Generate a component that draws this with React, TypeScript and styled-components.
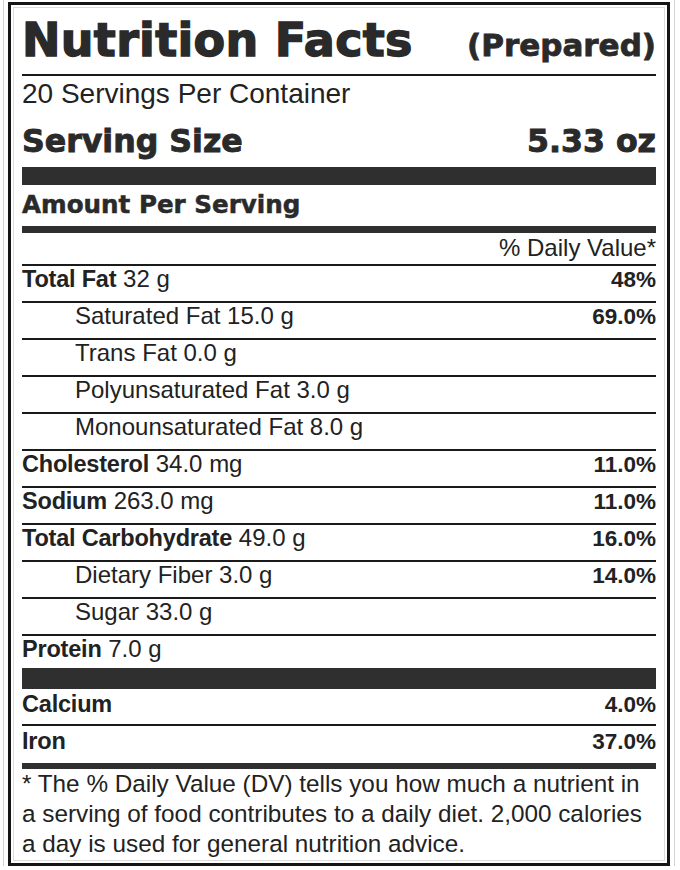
import React from "react";
import styled, { createGlobalStyle } from "styled-components";

const GlobalStyle = createGlobalStyle`
  html, body { margin: 0; padding: 0; background: #ffffff; }
  body { font-family: "Liberation Sans", Arial, sans-serif; color: #222; }
`;

const Page = styled.div`
  padding: 2px 0 0 8px;
`;

const Label = styled.section`
  box-sizing: border-box;
  width: 662px;
  border: 3px solid #151515;
  padding: 0 11px 4px;
  background: #fff;
  box-shadow: inset 0 0 0 2px #fff, inset 0 0 0 3px #dcdcdc, 0 0 0 4px #fff,
    0 0 0 5px #d4d4d4;
`;

const Header = styled.header`
  display: flex;
  justify-content: space-between;
  align-items: baseline;
  height: 46px;
  padding: 12px 0 11px;
  border-bottom: 2px solid #1a1a1a;
`;

const Title = styled.h1`
  margin: 0;
  font-family: "DejaVu Sans", sans-serif;
  font-weight: 700;
  font-size: 46px;
  line-height: 46px;
  letter-spacing: 0.3px;
  color: #2a2a2a;
  -webkit-text-stroke: 1.4px #2a2a2a;
`;

const Subtitle = styled.span`
  font-family: "DejaVu Sans", sans-serif;
  font-weight: 700;
  font-size: 31px;
  line-height: 31px;
  color: #2a2a2a;
  -webkit-text-stroke: 0.8px #2a2a2a;
`;

const Servings = styled.div`
  font-size: 28px;
  line-height: 28px;
  height: 28px;
  padding-top: 4px;
  margin-bottom: 18px;
  color: #222;
`;

const ServingSize = styled.div`
  display: flex;
  justify-content: space-between;
  align-items: baseline;
  height: 31px;
  font-family: "DejaVu Sans", sans-serif;
  font-weight: 700;
  font-size: 31.6px;
  line-height: 31px;
  padding-bottom: 10px;
  color: #2a2a2a;
  -webkit-text-stroke: 0.9px #2a2a2a;
`;

const Bar = styled.div<{ $h: number }>`
  height: ${(p) => p.$h}px;
  background: #2f2f2f;
`;

const Amount = styled.div`
  height: 25px;
  font-family: "DejaVu Sans", sans-serif;
  font-weight: 700;
  font-size: 24.6px;
  line-height: 25px;
  padding: 7px 0 9px;
  color: #2a2a2a;
  -webkit-text-stroke: 0.5px #2a2a2a;
`;

const DVHeader = styled.div`
  height: 24px;
  text-align: right;
  font-size: 24px;
  line-height: 24px;
  padding: 3px 0 4px;
  color: #222;
`;

const Row = styled.div<{
  $indent: boolean;
  $border: boolean;
  $pt: number;
  $h: number;
}>`
  display: flex;
  justify-content: space-between;
  align-items: baseline;
  box-sizing: content-box;
  height: ${(p) => p.$h - p.$pt}px;
  overflow: visible;
  border-top: ${(p) => (p.$border ? "2px solid #1a1a1a" : "none")};
  padding: ${(p) => p.$pt}px 0 0 ${(p) => (p.$indent ? 53 : 0)}px;
  font-size: 24px;
  line-height: 24px;
  color: #222;
`;

const Name = styled.span`
  white-space: nowrap;
`;

const Strong = styled.b`
  font-weight: 700;
  font-size: 23.5px;
  letter-spacing: -0.2px;
  color: #222;
`;

const Pct = styled.span`
  font-weight: 700;
  font-size: 22.5px;
  color: #222;
`;

const Footer = styled.p`
  margin: 0;
  font-size: 24.3px;
  line-height: 30px;
  color: #222;
`;

const FooterLine = styled.span`
  display: block;
  white-space: nowrap;
`;

type Nutrient = {
  bold?: string;
  name?: string;
  amount?: string;
  pct?: string;
  indent?: boolean;
  border?: boolean;
  pt?: number;
  h?: number;
};

const nutrients: Nutrient[] = [
  { bold: "Total Fat", amount: "32 g", pct: "48%" },
  { name: "Saturated Fat", amount: "15.0 g", pct: "69.0%", indent: true },
  { name: "Trans Fat", amount: "0.0 g", indent: true },
  { name: "Polyunsaturated Fat", amount: "3.0 g", indent: true },
  { name: "Monounsaturated Fat", amount: "8.0 g", indent: true },
  { bold: "Cholesterol", amount: "34.0 mg", pct: "11.0%" },
  { bold: "Sodium", amount: "263.0 mg", pct: "11.0%" },
  { bold: "Total Carbohydrate", amount: "49.0 g", pct: "16.0%" },
  { name: "Dietary Fiber", amount: "3.0 g", pct: "14.0%", indent: true },
  { name: "Sugar", amount: "33.0 g", indent: true },
  { bold: "Protein", amount: "7.0 g", h: 32 },
];

const minerals: Nutrient[] = [
  { bold: "Calcium", pct: "4.0%", border: false, pt: 3, h: 35 },
  { bold: "Iron", pct: "37.0%", border: true, pt: 3, h: 37 },
];

const NutrientRow: React.FC<{ n: Nutrient }> = ({ n }) => (
  <Row
    $indent={!!n.indent}
    $border={n.border ?? true}
    $pt={n.pt ?? 1}
    $h={n.h ?? 35}
  >
    <Name>
      {n.bold && <Strong>{n.bold}</Strong>}
      {n.name && n.name}
      {n.amount && ` ${n.amount}`}
    </Name>
    {n.pct && <Pct>{n.pct}</Pct>}
  </Row>
);

export default function App() {
  return (
    <>
      <GlobalStyle />
      <Page>
        <Label>
          <Header>
            <Title>Nutrition Facts</Title>
            <Subtitle>(Prepared)</Subtitle>
          </Header>
          <Servings>20 Servings Per Container</Servings>
          <ServingSize>
            <span>Serving Size</span>
            <span>5.33 oz</span>
          </ServingSize>
          <Bar $h={18} />
          <Amount>Amount Per Serving</Amount>
          <Bar $h={7} />
          <DVHeader>% Daily Value*</DVHeader>
          {nutrients.map((n, i) => (
            <NutrientRow key={i} n={n} />
          ))}
          <Bar $h={21} />
          {minerals.map((n, i) => (
            <NutrientRow key={i} n={n} />
          ))}
          <Bar $h={6} />
          <Footer>
            <FooterLine>
              * The % Daily Value (DV) tells you how much a nutrient in
            </FooterLine>
            <FooterLine>
              a serving of food contributes to a daily diet. 2,000 calories
            </FooterLine>
            <FooterLine>a day is used for general nutrition advice.</FooterLine>
          </Footer>
        </Label>
      </Page>
    </>
  );
}
